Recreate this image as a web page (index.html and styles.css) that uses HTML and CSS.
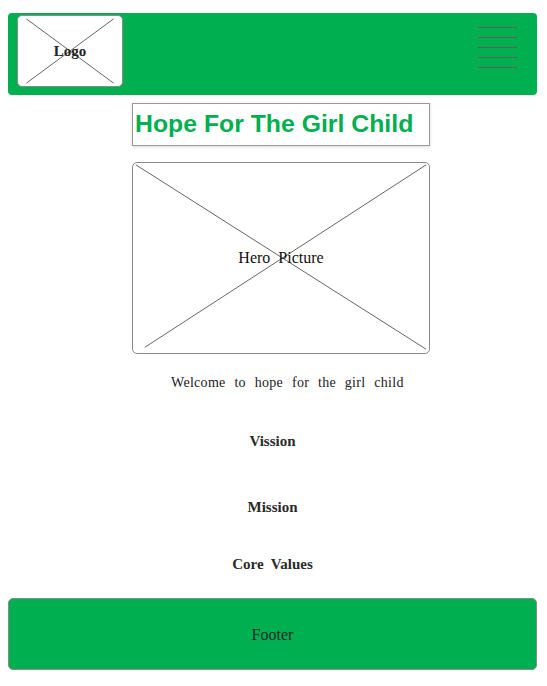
FILE: index.html
```html
<!DOCTYPE html>
<html>
<head>
<meta charset="utf-8">
<link rel="stylesheet" href="styles.css">
</head>
<body>
<header class="header">
  <div class="logo">
    <svg class="cross" viewBox="0 0 100 100" preserveAspectRatio="none"><line x1="8" y1="4" x2="92" y2="96"/><line x1="92" y1="4" x2="8" y2="96"/></svg>
    <span class="logo-text">Logo</span>
  </div>
  <div class="burger"><span></span><span></span><span></span><span></span><span></span></div>
</header>
<main class="main">
  <div class="col">
    <h1 class="title">Hope For The Girl Child</h1>
    <div class="hero">
      <svg class="cross" viewBox="0 0 100 100" preserveAspectRatio="none"><line x1="1" y1="1" x2="99" y2="98"/><line x1="99" y1="1" x2="4" y2="97"/></svg>
      <span class="hero-text">Hero&nbsp; Picture</span>
    </div>
  </div>
  <p class="welcome">Welcome to hope for the girl child</p>
  <p class="section s1">Vission</p>
  <p class="section s2">Mission</p>
  <p class="section s3">Core&nbsp; Values</p>
</main>
<footer class="footer">Footer</footer>
</body>
</html>
```

FILE: styles.css
```css
html, body { margin: 0; padding: 0; background: #fff; }
body { padding: 13px 10px 0 8px; font-family: "Liberation Serif", "Times New Roman", serif; color: #222; }
.header {
  height: 82px; box-sizing: border-box; background: #00af4f; border-radius: 4px;
  display: flex; justify-content: space-between; align-items: flex-start;
  padding: 2px 20px 0 9px;
}
.logo {
  position: relative; width: 106px; height: 72px; box-sizing: border-box;
  background: #fff; border: 1px solid #8a8a8a; border-radius: 5px;
  display: flex; align-items: center; justify-content: center;
}
.cross { position: absolute; inset: 0; width: 100%; height: 100%; }
.cross line { stroke: #666; stroke-width: 1; vector-effect: non-scaling-stroke; }
.logo-text { position: relative; font-size: 15px; font-weight: bold; color: #222; }
.burger { display: flex; flex-direction: column; gap: 9px; padding-top: 12px; }
.burger span { display: block; width: 39px; height: 1px; background: #5f5f5f; }
.main { display: flex; flex-direction: column; }
.col { margin-left: 124px; width: 298px; display: flex; flex-direction: column; }
.title {
  margin: 8px 0 0; height: 43px; box-sizing: border-box; border: 1px solid #999;
  box-shadow: 0 1px 3px rgba(0,0,0,0.15);
  font-family: "Liberation Sans", Arial, sans-serif; font-size: 24.8px; font-weight: bold;
  color: #00af4f; padding: 5px 0 0 2px; line-height: 30px;
}
.hero {
  position: relative; margin-top: 16px; height: 192px; box-sizing: border-box;
  border: 1px solid #8a8a8a; border-radius: 5px;
  display: flex; align-items: center; justify-content: center;
}
.hero-text { position: relative; font-size: 16px; font-weight: normal; color: #111; }
.welcome {
  margin: 20px 0 0 163px; font-size: 14px; word-spacing: 5px; letter-spacing: 0.3px; line-height: 18px;
}
.section { margin: 0; text-align: center; font-size: 15px; font-weight: bold; line-height: 18px; width: 529px; color: #2a2a2a; }
.s1 { margin-top: 40px; }
.s2 { margin-top: 48px; }
.s3 { margin-top: 39px; }
.footer {
  margin-top: 25px; height: 72px; box-sizing: border-box; background: #00af4f;
  border: 1px solid #8a8a8a; border-radius: 5px;
  display: flex; align-items: center; justify-content: center;
  font-size: 16px; color: #2a2a2a; padding-top: 2px;
}
```
